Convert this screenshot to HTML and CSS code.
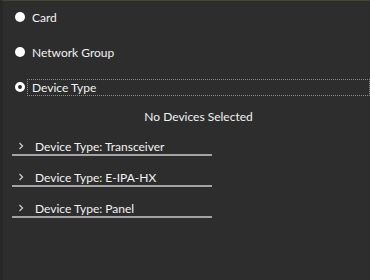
FILE: index.html
```html
<!DOCTYPE html>
<html lang="en">
<head>
  <meta charset="UTF-8" />
  <title>Device Filter</title>
  <link rel="stylesheet" href="styles.css">
</head>
<body>
  <div class="panel">
    <!-- Grouping options -->
    <div class="radio-list">
      <div class="radio-row">
        <span class="dot"></span>
        <span class="radio-label">Card</span>
      </div>
      <div class="radio-row">
        <span class="dot"></span>
        <span class="radio-label">Network Group</span>
      </div>
      <div class="radio-row">
        <span class="dot checked"></span>
        <span class="radio-label focused">Device Type</span>
      </div>
    </div>

    <div class="empty-msg">No Devices Selected</div>

    <!-- Collapsed groups -->
    <div class="groups">
      <div class="group">
        <svg class="chev" width="8" height="8" viewBox="0 0 8 8"><polyline points="2.5,1 5.5,4 2.5,7" /></svg>
        <span>Device Type: Transceiver</span>
      </div>
      <div class="group">
        <svg class="chev" width="8" height="8" viewBox="0 0 8 8"><polyline points="2.5,1 5.5,4 2.5,7" /></svg>
        <span>Device Type: E-IPA-HX</span>
      </div>
      <div class="group">
        <svg class="chev" width="8" height="8" viewBox="0 0 8 8"><polyline points="2.5,1 5.5,4 2.5,7" /></svg>
        <span>Device Type: Panel</span>
      </div>
    </div>
  </div>
</body>
</html>
```

FILE: styles.css
```css
html, body { margin: 0; height: 100%; }
body { background: #2d2d2d; font-family: Lato, 'DejaVu Sans', sans-serif; font-size: 12px; color: #f2f2f2; overflow: hidden; }
.panel { height: 100%; box-sizing: border-box; border-top: 1px solid #4a4235; border-left: 3px solid #272727; }
/* Radio options */
.radio-list { display: flex; flex-direction: column; gap: 19px; padding: 8px 0 0 12px; }
.radio-row { display: flex; align-items: center; height: 16px; }
.dot { width: 10px; height: 10px; border-radius: 50%; background: #fff; box-sizing: border-box; flex: none; }
.dot.checked { background: #2d2d2d; border: 3px solid #fff; }
.radio-label { display: flex; align-items: center; height: 17px; padding-left: 4px; margin-left: 2px; box-sizing: border-box; border: 1px solid transparent; width: 400px; }
.radio-label.focused { border: 1px dotted #8c8c8c; }
/* Empty state */
.empty-msg { margin: 14px 0 0 24px; width: 343px; text-align: center; line-height: 16px; }
/* Collapsed groups */
.groups { display: flex; flex-direction: column; gap: 13px; margin: 13px 0 0 9px; width: 200px; }
.group { display: flex; align-items: center; height: 16px; border-bottom: 2px solid #a3a3a3; }
.chev { margin-left: 5px; margin-right: 10px; }
.chev polyline { fill: none; stroke: #c8c8c8; stroke-width: 1.3; }
```
